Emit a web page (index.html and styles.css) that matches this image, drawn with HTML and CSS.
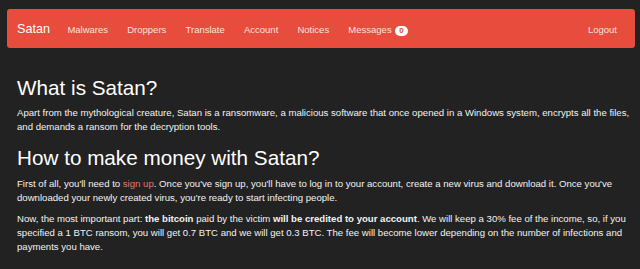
FILE: index.html
```html
<!DOCTYPE html>
<html>
<head>
<meta charset="utf-8">
<link rel="stylesheet" href="styles.css">
</head>
<body>
<nav class="navbar">
  <a class="brand" href="#">Satan</a>
  <ul class="nav">
    <li><a href="#">Malwares</a></li>
    <li><a href="#">Droppers</a></li>
    <li><a href="#">Translate</a></li>
    <li><a href="#">Account</a></li>
    <li><a href="#">Notices</a></li>
    <li><a href="#">Messages <span class="badge">0</span></a></li>
  </ul>
  <ul class="nav nav-right">
    <li><a href="#">Logout</a></li>
  </ul>
</nav>
<main class="content">
  <h2 class="first">What is Satan?</h2>
  <p>Apart from the mythological creature, Satan is a ransomware, a malicious software that once opened in a Windows system, encrypts all the files, and demands a ransom for the decryption tools.</p>
  <h2>How to make money with Satan?</h2>
  <p>First of all, you'll need to <a class="link" href="#">sign up</a>. Once you've sign up, you'll have to log in to your account, create a new virus and download it. Once you've downloaded your newly created virus, you're ready to start infecting people.</p>
  <p>Now, the most important part: <b>the bitcoin</b> paid by the victim <b>will be credited to your account</b>. We will keep a 30% fee of the income, so, if you specified a 1 BTC ransom, you will get 0.7 BTC and we will get 0.3 BTC. The fee will become lower depending on the number of infections and payments you have.</p>
</main>
</body>
</html>
```
FILE: styles.css
```css
* { box-sizing: border-box; }
html, body { margin: 0; padding: 0; }
body {
  background: #222222;
  color: #f2f2f2;
  font-family: "Liberation Sans", Arial, sans-serif;
  font-size: 9.6px;
  line-height: 13.8px;
  padding: 9px 5px 0 7px;
}
.navbar {
  display: flex;
  align-items: center;
  background: #e74c3c;
  border-radius: 3px;
  height: 39px;
  padding: 2px 0 0 0;
}
.brand {
  color: #ffffff;
  text-decoration: none;
  font-size: 12.6px;
  padding: 0 7.9px 0 10px;
}
.nav {
  display: flex;
  list-style: none;
  margin: 0;
  padding: 0;
}
.nav li a {
  color: #fbe2df;
  text-decoration: none;
  font-size: 9.5px;
  display: block;
  padding: 0 9.6px;
}
.nav-right { margin-left: auto; }
.nav-right li a { padding-right: 18px; }
.badge {
  display: inline-block;
  background: #ffffff;
  color: #e74c3c;
  font-weight: bold;
  font-size: 8px;
  line-height: 10px;
  height: 10px;
  padding: 0 4px;
  border-radius: 5px;
  vertical-align: 0;
  margin-left: 1px;
}
.content {
  padding: 0 0 0 10px;
}
h2 {
  font-weight: normal;
  color: #ffffff;
  font-size: 20.7px;
  line-height: 24px;
  margin: 12px 0 7.5px;
}
h2.first { margin-top: 28px; margin-bottom: 6px; }
p { margin: 0 0 7.5px; }
.link { color: #e8776c; text-decoration: none; }
```
